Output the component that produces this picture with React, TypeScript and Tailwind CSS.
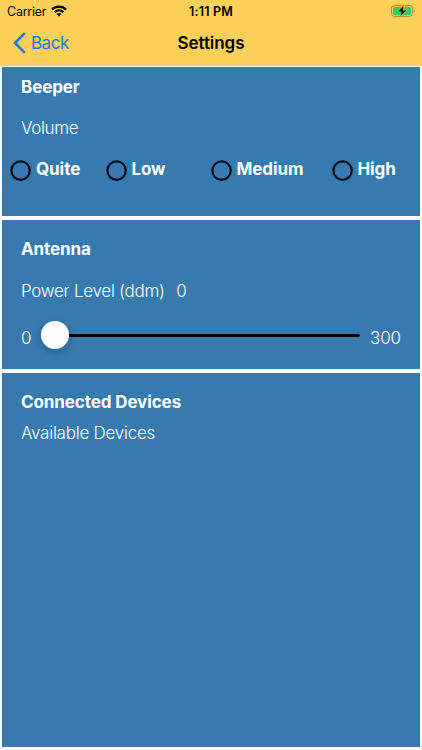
import type { ReactNode } from 'react';
import { clsx } from 'clsx';

const volumes = [
  { label: 'Quite', width: 'w-[95.5px]' },
  { label: 'Low', width: 'w-[105px]' },
  { label: 'Medium', width: 'w-[121px]' },
  { label: 'High', width: 'w-[70px]' },
];

function StatusBar() {
  return (
    <div className="flex h-[22px] items-center justify-between px-[7px] text-black">
      <div className="flex w-[120px] items-center gap-[5px]">
        <span className="pt-px text-[12.5px] leading-[22px] tracking-[-0.25px]">Carrier</span>
        <svg width="16" height="12" viewBox="0 0 16 12" fill="none" stroke="currentColor" strokeWidth="2.3">
          <path d="M1 4.6C4.8 0.7 11.2 0.7 15 4.6" />
          <path d="M3.6 7.2C6 4.8 10 4.8 12.4 7.2" />
          <path d="M8 11.4 5.6 9C7 7.8 9 7.8 10.4 9Z" fill="currentColor" stroke="none" />
        </svg>
      </div>
      <span className="pt-px text-[12.5px] leading-[22px] font-semibold tracking-[0.2px]">1:11 PM</span>
      <div className="flex w-[120px] justify-end">
        <svg width="25" height="12" viewBox="0 0 25 12" fill="none">
          <rect x="1.5" y="0.6" width="21" height="10.8" rx="2.8" stroke="#a28b43" strokeWidth="1" />
          <rect x="3" y="2.1" width="18" height="7.8" rx="1.5" fill="#3ccb5a" />
          <path d="M23.8 4.2C25.2 4.8 25.2 7.2 23.8 7.8Z" fill="#a28b43" />
          <path d="M13.8 0.6 7.6 6.8H11.4L10.3 11.5 16.8 5.2H12.8Z" fill="#000" stroke="#d5d05a" strokeWidth="0.5" />
        </svg>
      </div>
    </div>
  );
}

function NavBar() {
  return (
    <div className="grid h-[42px] grid-cols-[1fr_auto_1fr] items-center">
      <div className="flex items-center gap-[5px] pl-[13px] text-[#187bdc]">
        <svg width="13" height="22" viewBox="0 0 13 22" fill="none" stroke="currentColor" strokeWidth="2.6">
          <path d="M11.8 1.2 2 11 11.8 20.8" />
        </svg>
        <span className="text-[17px] leading-6 tracking-[-0.5px]">Back</span>
      </div>
      <h1 className="text-[17px] leading-6 font-semibold tracking-[-0.05px] text-black">Settings</h1>
    </div>
  );
}

function Panel({ className, children }: { className: string; children: ReactNode }) {
  return <section className={clsx('bg-[#377ab0] pl-[18.6px] text-[17px] leading-6 text-white', className)}>{children}</section>;
}

export default function App() {
  return (
    <div className="h-[750px] w-[422px] overflow-hidden bg-white font-[Inter,sans-serif]">
      <header className="h-[66px] bg-[#fad058]">
        <StatusBar />
        <NavBar />
      </header>

      <main className="flex flex-col gap-1 px-[2.4px] pt-[1.4px]">
        <Panel className="h-[148.6px] pt-[8px]">
          <h2 className="font-bold tracking-[-0.1px]">Beeper</h2>
          <p className="mt-[17px] font-[350] tracking-[-0.35px]">Volume</p>
          <div className="mt-[17px] -ml-[10.6px] flex">
            {volumes.map(({ label, width }) => (
              <label key={label} className={clsx('flex gap-1', width)}>
                <svg className="mt-[2.6px] shrink-0 overflow-visible" width="21.5" height="21.5" viewBox="0 0 21.5 21.5" fill="none">
                  <circle cx="10.6" cy="10.6" r="9.2" stroke="#050a14" strokeWidth="2.2" />
                </svg>
                <span className="font-bold tracking-[-0.05px]">{label}</span>
              </label>
            ))}
          </div>
        </Panel>

        <Panel className="h-[149px] pt-[17.4px]">
          <h2 className="font-bold tracking-[-0.1px]">Antenna</h2>
          <p className="mt-[17.8px] flex gap-[11.5px] font-[350] tracking-[-0.28px]">
            <span>Power Level (ddm)</span>
            <span>0</span>
          </p>
          <div className="mt-[17.8px] flex h-[28px] items-center font-[350]">
            <span className="w-[20.4px] pt-[6px]">0</span>
            <div className="flex w-[318.6px] items-center">
              <span className="h-[28px] w-[28px] shrink-0 rounded-full bg-white shadow-[0_3px_8px_rgba(0,0,0,0.2)]" />
              <span className="mt-px h-[3px] flex-1 rounded-r-full bg-[#03060c]" />
            </div>
            <span className="pt-[6px] pl-[10px] tracking-[-0.1px]">300</span>
          </div>
        </Panel>

        <Panel className="h-[374.5px] pt-[17px]">
          <h2 className="font-bold tracking-[-0.1px]">Connected Devices</h2>
          <p className="mt-[7px] font-[350] tracking-[-0.25px]">Available Devices</p>
        </Panel>
      </main>
    </div>
  );
}
